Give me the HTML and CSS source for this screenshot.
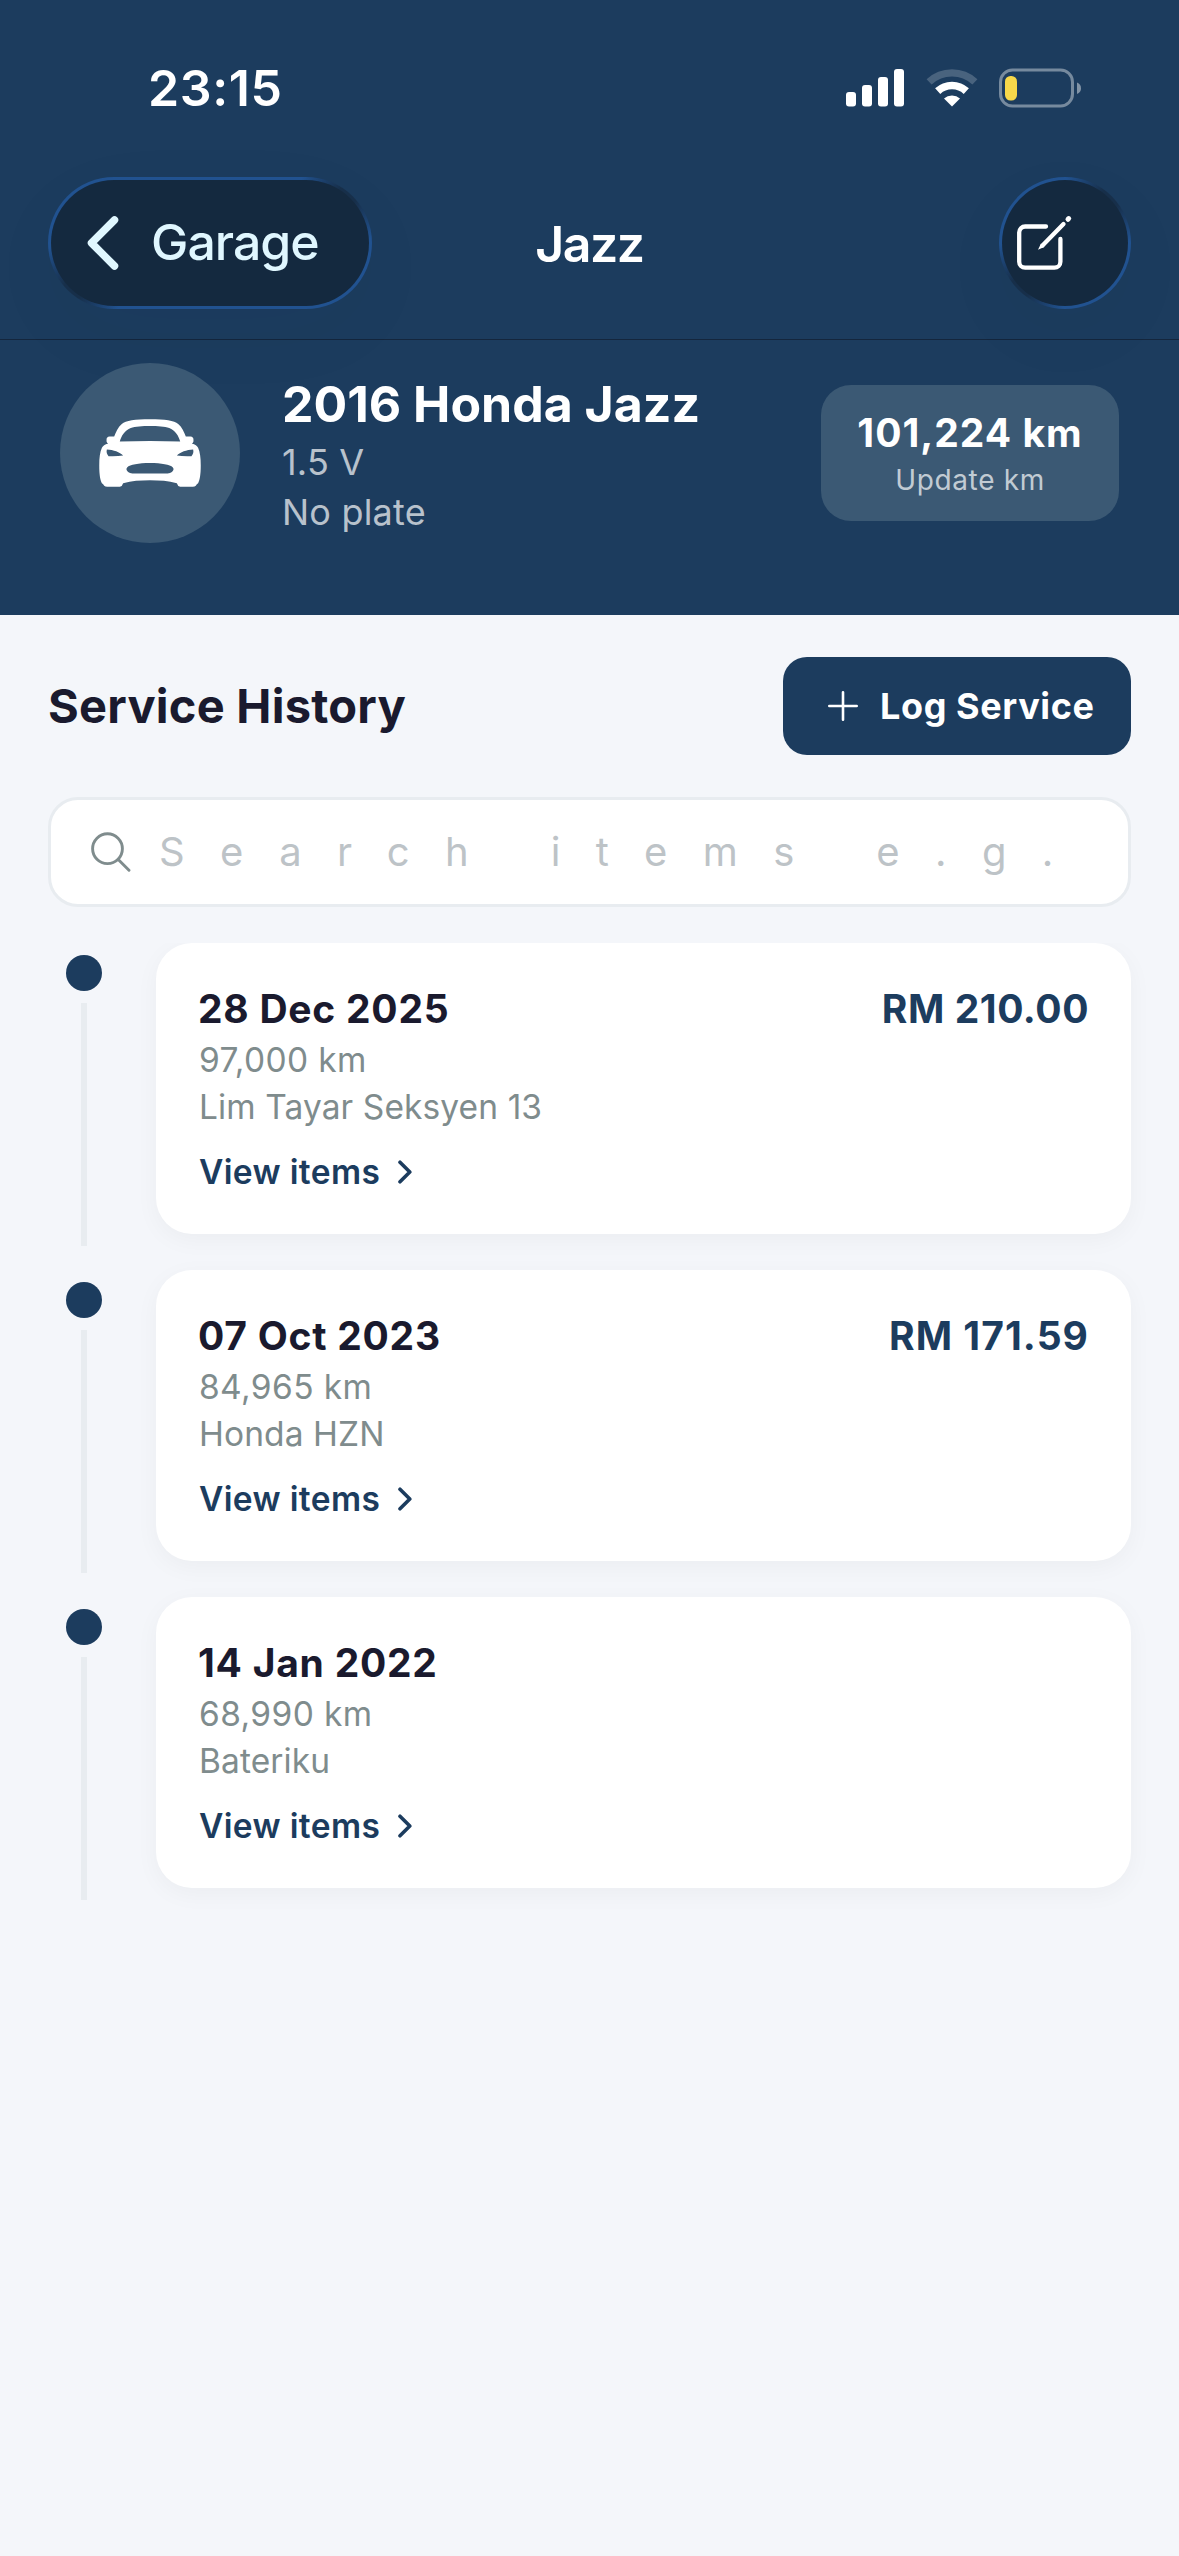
FILE: index.html
```
<!DOCTYPE html>
<html lang="en">
<head>
<meta charset="utf-8">
<title>Jazz</title>
<link rel="stylesheet" href="styles.css">
</head>
<body>
<svg width="0" height="0" class="symbols" aria-hidden="true">
  <symbol id="chevron" viewBox="0 0 14 24"><path d="M2 2.2 L11.8 12 L2 21.8" fill="none" stroke="currentColor" stroke-width="3.6" stroke-linecap="round" stroke-linejoin="round"/></symbol>
</svg>
<div class="screen">
  <header class="header">
    <div class="status">
      <span class="status-time">23:15</span>
      <div class="status-icons">
        <svg class="signal" width="58" height="38" viewBox="0 0 58 38" fill="#fff"><rect x="0" y="23" width="10" height="14.5" rx="3"/><rect x="16" y="16" width="10" height="21.500" rx="3"/><rect x="32" y="8" width="10" height="29.500" rx="3"/><rect x="48" y="0" width="10" height="37.500" rx="3"/></svg>
        <svg class="wifi" width="52" height="38" viewBox="0 0 52 38" fill="none" stroke="#fff"><path d="M3.100 12.900A33.600 33.600 0 0 1 48.900 12.900" stroke-width="7.400" stroke-opacity=".2"/><path d="M11.700 22.100A21 21 0 0 1 40.300 22.100" stroke-width="7.600"/><path d="M26 37.500L18 29.500A12 12 0 0 1 34 29.500Z" fill="#fff" stroke="none"/></svg>
        <svg class="battery" width="83" height="40" viewBox="0 0 83 40"><rect x="1.500" y="2" width="72" height="36" rx="12" fill="none" stroke="#fff" stroke-opacity=".4" stroke-width="3"/><path d="M78 14.500C80.700 15.500 82 17.500 82 20.200S80.700 25 78 26Z" fill="#fff" fill-opacity=".45"/><rect x="6" y="8" width="12" height="24.500" rx="5.500" fill="#f7d84a"/></svg>
      </div>
    </div>
    <nav class="nav">
      <button class="glass back">
        <svg width="32" height="54" viewBox="0 0 32 54"><path d="M27.500 4 L4.500 27 L27.500 50" fill="none" stroke="currentColor" stroke-width="7.500" stroke-linecap="round" stroke-linejoin="round"/></svg>
        <span>Garage</span>
      </button>
      <h1 class="nav-title">Jazz</h1>
      <button class="glass edit" aria-label="Edit">
        <svg width="56" height="56" viewBox="0 -1 56 56" fill="none" stroke="#fff" stroke-width="4.300" stroke-linecap="round" stroke-linejoin="round"><path d="M29 10.500H8.200a6 6 0 0 0-6 6V45.700a6 6 0 0 0 6 6H37.400a6 6 0 0 0 6-6V23"/><path d="M25.500 29.500L46.500 8"/><path d="M21 33.700L24 27.500L27.300 30.900Z" fill="#fff" stroke="none"/><path d="M51 3.300L51.700 2.600" stroke-width="5"/></svg>
      </button>
    </nav>
    <section class="vehicle">
      <div class="avatar">
        <svg width="102" height="68" viewBox="42 40 306 205"><path fill="#fff" fill-rule="evenodd" d="M195 41C150 41 122 45 110 55C99 64 92 80 87 93H73Q64 94 64 102V108Q65 112 69 114Q54 118 50 127C44 140 42 158 42 180C42 208 45 224 50 234Q54 237 57 241Q60 244 66 244H104Q112 243 114 234C140 227 165 225 195 225C225 225 250 227 276 234Q278 243 286 244H324Q330 244 333 241Q336 237 340 234C345 224 348 208 348 180C348 158 346 140 340 127Q336 118 321 114Q325 112 326 108V102Q326 94 317 93H303C298 80 291 64 280 55C268 45 240 41 195 41ZM195 61C172 61 150 63 137 67C120 73 108 91 104 108Q150 106.500 195 106.500Q240 106.500 286 108C282 91 270 73 253 67C240 63 218 61 195 61ZM65 132C85 133 104 140 114 150Q96 153 70 152Q62 143 65 132ZM325 132C305 133 286 140 276 150Q294 153 320 152Q328 143 325 132ZM195 173C160 173 135 178 126 186Q121 192 129 200Q134 204 142 204H248Q256 204 261 200Q269 192 264 186C255 178 230 173 195 173Z"/></svg>
      </div>
      <div class="vehicle-info">
        <h2 class="vehicle-name">2016 Honda Jazz</h2>
        <p class="vehicle-sub">1.5 V</p>
        <p class="vehicle-sub">No plate</p>
      </div>
      <button class="odometer">
        <span class="odometer-value">101,224 km</span>
        <span class="odometer-action">Update km</span>
      </button>
    </section>
  </header>

  <main class="content">
    <div class="toolbar">
      <h2 class="toolbar-title">Service History</h2>
      <button class="log">
        <svg width="30" height="30" viewBox="0 0 30 30"><path d="M15 1.300V28.700M1.300 15H28.700" stroke="currentColor" stroke-width="2.600" stroke-linecap="round"/></svg>
        <span>Log Service</span>
      </button>
    </div>
    <div class="search">
      <svg width="40" height="40" viewBox="0 0 40 40" fill="none" stroke="#7f8c8d" stroke-width="2.900" stroke-linecap="round"><circle cx="16.500" cy="16.700" r="14.900"/><path d="M27.500 27.700L38 38.300"/></svg>
      <span class="search-placeholder">Search items e.g.</span>
    </div>

    <ol class="timeline">
      <li class="entry">
        <div class="rail"><span class="dot"></span><span class="line"></span></div>
        <article class="card">
          <div class="card-head"><h3 class="date">28 Dec 2025</h3><span class="amount">RM 210.00</span></div>
          <p class="km">97,000 km</p>
          <p class="place">Lim Tayar Seksyen 13</p>
          <a class="view">View items<svg width="14" height="24"><use href="#chevron"/></svg></a>
        </article>
      </li>
      <li class="entry">
        <div class="rail"><span class="dot"></span><span class="line"></span></div>
        <article class="card">
          <div class="card-head"><h3 class="date">07 Oct 2023</h3><span class="amount amount-loose">RM 171.59</span></div>
          <p class="km">84,965 km</p>
          <p class="place">Honda HZN</p>
          <a class="view">View items<svg width="14" height="24"><use href="#chevron"/></svg></a>
        </article>
      </li>
      <li class="entry">
        <div class="rail"><span class="dot"></span><span class="line"></span></div>
        <article class="card">
          <div class="card-head"><h3 class="date">14 Jan 2022</h3></div>
          <p class="km">68,990 km</p>
          <p class="place">Bateriku</p>
          <a class="view">View items<svg width="14" height="24"><use href="#chevron"/></svg></a>
        </article>
      </li>
    </ol>
  </main>
</div>
</body>
</html>
```
FILE: styles.css
```
* { box-sizing: border-box; margin: 0; padding: 0; }

:root {
  --navy: #1c3c5e;
  --ink: #1a1a2e;
  --muted: #7f8c8d;
  --line: #e8ecf0;
  --bg: #f4f6fa;
}

body {
  font-family: Inter, "Liberation Sans", sans-serif;
  background: var(--bg);
  color: var(--ink);
}

.symbols { display: block; }

svg { display: block; flex: none; }

button { border: 0; font: inherit; color: inherit; background: none; }

.screen {
  width: 1179px;
  height: 2556px;
  display: flex;
  flex-direction: column;
  overflow: hidden;
}

/* Header */
.header {
  height: 615px;
  background: var(--navy);
  color: #fff;
}

.status {
  height: 177px;
  padding: 0 97px 2px 148px;
  display: flex;
  align-items: center;
  justify-content: space-between;
}

.status-time {
  font-size: 50px;
  font-weight: 600;
  letter-spacing: .6px;
  line-height: 60px;
}

.status-icons { display: flex; align-items: center; }
.wifi { margin-left: 21.500px; }
.battery { margin-left: 21.500px; }

.nav {
  height: 163px;
  padding: 0 48px;
  display: grid;
  grid-template-columns: 1fr auto 1fr;
  align-items: start;
  border-bottom: 1px solid #14263d;
}

/* The rim light fades out at the top-right and bottom-left corners */
.glass {
  --rim-x: 26px;
  height: 132px;
  display: flex;
  align-items: center;
  border: 3px solid transparent;
  border-radius: 66px;
  background:
    linear-gradient(#14293f, #14293f) padding-box,
    radial-gradient(circle at calc(100% - var(--rim-x)) 20px, #172f4a 10px, transparent 48px) border-box,
    radial-gradient(circle at var(--rim-x) calc(100% - 20px), #172f4a 10px, transparent 48px) border-box,
    linear-gradient(#215290, #215290) border-box;
  box-shadow: 0 24px 90px rgba(0, 20, 60, .03);
}

.back {
  width: 324px;
  padding-left: 36px;
  color: #e0f7ff;
}

.back span {
  margin-left: 32px;
  font-size: 50px;
  font-weight: 500;
  letter-spacing: -1px;
  line-height: 60px;
  position: relative;
  top: -1px;
}

.nav-title {
  padding-top: 1px;
  font-size: 50px;
  font-weight: 600;
  letter-spacing: -1.500px;
  line-height: 132px;
}

.edit {
  --rim-x: 20px;
  width: 132px;
  justify-self: end;
  padding-left: 15px;
}

.vehicle {
  padding: 23px 60px 0;
  display: flex;
  align-items: center;
}

.avatar {
  width: 180px;
  height: 180px;
  border-radius: 50%;
  background: #3b5974;
  display: flex;
  align-items: center;
  justify-content: center;
}

.vehicle-info { flex: 1; padding: 4px 0 0 42px; }

.vehicle-name {
  font-size: 50px;
  font-weight: 700;
  line-height: 60px;
}

.vehicle-sub {
  font-size: 36px;
  line-height: 50px;
  letter-spacing: .2px;
  color: rgba(255, 255, 255, .7);
}

.vehicle-name + .vehicle-sub { margin-top: 3px; }

.odometer {
  width: 298px;
  height: 136px;
  border-radius: 30px;
  background: #3b5974;
  display: flex;
  flex-direction: column;
  align-items: center;
  padding-top: 24px;
}

.odometer-value {
  font-size: 39px;
  font-weight: 700;
  line-height: 48px;
  letter-spacing: 1px;
}

.odometer-action {
  margin-top: 5px;
  font-size: 28px;
  line-height: 36px;
  letter-spacing: .65px;
  color: rgba(255, 255, 255, .7);
}

/* Content */
.content {
  flex: 1;
  padding: 42px 0 0;
  display: flex;
  flex-direction: column;
}

.toolbar {
  padding: 0 48px;
  display: flex;
  align-items: center;
  justify-content: space-between;
}

.toolbar-title { font-size: 47px; font-weight: 700; letter-spacing: .25px; line-height: 60px; }

.log {
  width: 348px;
  height: 98px;
  padding-left: 45px;
  border-radius: 24px;
  background: var(--navy);
  color: #fff;
  display: flex;
  align-items: center;
  gap: 22px;
  font-size: 36px;
  font-weight: 700;
  letter-spacing: .6px;
}

.search {
  height: 110px;
  margin: 42px 48px 36px;
  padding-left: 40px;
  border: 3px solid var(--line);
  border-radius: 30px;
  background: #fff;
  display: flex;
  align-items: center;
}

.search-placeholder {
  margin-left: 28px;
  font-size: 40px;
  line-height: 50px;
  letter-spacing: 35.400px;
  white-space: nowrap;
  color: #bdc3c7;
}

/* Timeline */
.timeline {
  flex: 1;
  padding: 0 48px;
  overflow: hidden;
  list-style: none;
  display: flex;
  flex-direction: column;
  gap: 36px;
}

.entry { display: flex; }

.rail {
  width: 72px;
  margin: 12px 36px -12px 0;
  display: flex;
  flex-direction: column;
  align-items: center;
  gap: 12px;
}

.dot {
  width: 36px;
  height: 36px;
  border-radius: 50%;
  background: var(--navy);
}

.line { flex: 1; width: 6px; background: var(--line); }

.card {
  flex: 1;
  height: 291px;
  padding: 42px 42px 0;
  border-radius: 36px;
  background: #fff;
  box-shadow: 0 6px 24px rgba(0, 0, 0, .04);
}

.card-head {
  display: flex;
  justify-content: space-between;
  font-size: 39px;
  font-weight: 700;
  line-height: 48px;
}

.date { font: inherit; letter-spacing: .75px; }
.amount { color: var(--navy); letter-spacing: .55px; }
.amount-loose { letter-spacing: 1.050px; }

.km,
.place {
  padding-left: 1px;
  font-size: 33.500px;
  color: var(--muted);
}

.km { margin-top: 3px; line-height: 48px; letter-spacing: .4px; }
.place { line-height: 46px; letter-spacing: .1px; }

.view {
  margin-top: 19px;
  padding-left: 1px;
  display: flex;
  align-items: center;
  gap: 17.500px;
  font-size: 33.500px;
  font-weight: 600;
  line-height: 46px;
  letter-spacing: .35px;
  color: var(--navy);
}
```
